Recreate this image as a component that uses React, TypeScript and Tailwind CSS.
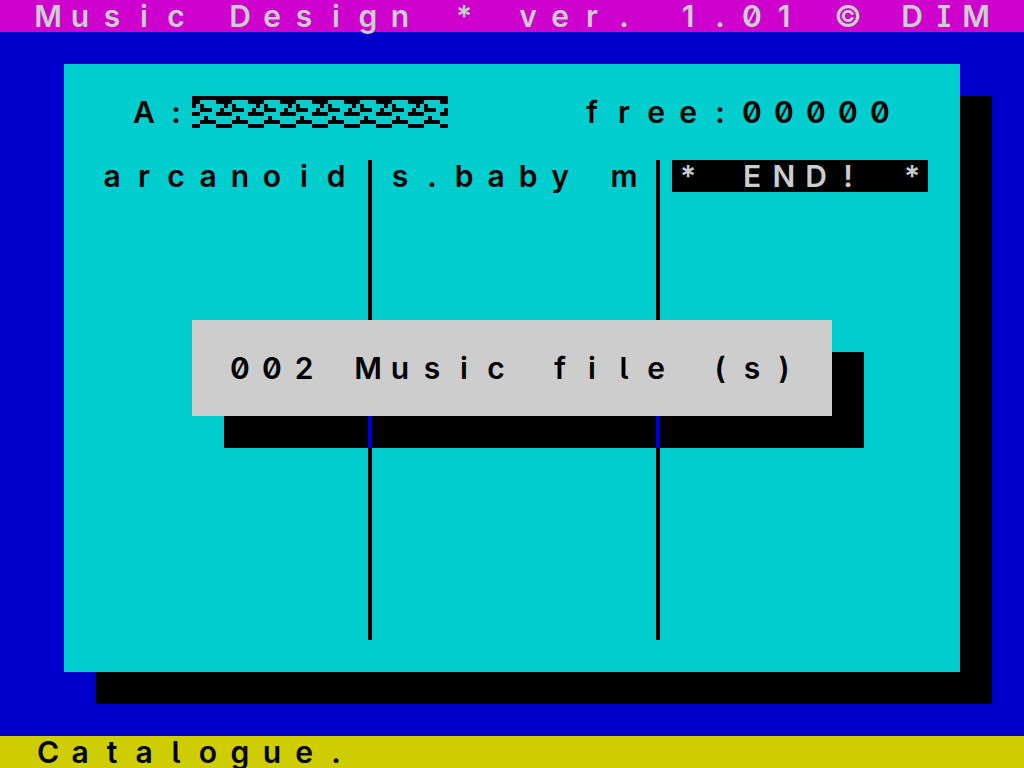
import { Fragment } from "react";
import clsx from "clsx";

const columns = [
  [{ name: "arcanoid", active: false }],
  [{ name: "s.baby m", active: false }],
  [{ name: "* END! *", active: true }],
];

// one 8x8 character, repeated where the disk name would be
const TILE = [
  "########",
  "##....##",
  "#.#.....",
  "..###..#",
  "##....##",
  "...#....",
  "..####..",
  "##....##",
];

// The screen is 32 characters wide, every character takes one cell
function Cells({ text }: { text: string }) {
  return (
    <>
      {text.split("").map((char, i) => (
        <span
          key={i}
          className="inline-block w-8 text-center align-top whitespace-pre"
        >
          {char}
        </span>
      ))}
    </>
  );
}

function DiskName() {
  return (
    <svg
      className="h-8 w-64"
      viewBox="0 0 64 8"
      shapeRendering="crispEdges"
      aria-hidden="true"
    >
      {TILE.map((row, y) =>
        row
          .repeat(8)
          .split("")
          .map((dot, x) =>
            dot === "#" ? (
              <rect key={`${x}-${y}`} x={x} y={y} width="1" height="1" />
            ) : null
          )
      )}
    </svg>
  );
}

function Divider() {
  return (
    <div className="flex w-8 flex-col items-start pl-4">
      <div className="h-64 w-1 bg-black" />
      {/* stays visible in the shadow of the message box */}
      <div className="relative z-20 h-8 w-1 bg-[#0000cd]" />
      <div className="w-1 flex-1 bg-black" />
    </div>
  );
}

export default function App() {
  return (
    <div className="flex min-h-screen flex-col bg-[#0000cd] font-['Inter',sans-serif] text-[30px] leading-8 font-semibold text-black [font-feature-settings:'zero','cv05','cv08']">
      <header className="h-8 bg-[#cd00cd] px-8 text-[#cdcdcd]">
        <h1 className="whitespace-nowrap">
          <Cells text="Music Design * ver. 1.01 © DIM" />
        </h1>
      </header>

      <main className="flex flex-1 flex-col px-16 pt-8 pb-16">
        <section className="relative flex flex-1 flex-col gap-8 bg-[#00cdcd] p-8 shadow-[32px_32px_0_0_#000]">
          <div className="flex h-8 justify-between px-8">
            <div className="flex">
              <p>
                <Cells text="A:" />
              </p>
              <DiskName />
            </div>
            <p>
              <Cells text="free:00000" />
            </p>
          </div>

          <div className="flex flex-1">
            {columns.map((files, i) => (
              <Fragment key={i}>
                {i > 0 && <Divider />}
                <ul className="flex-1">
                  {files.map((file) => (
                    <li key={file.name}>
                      <button
                        type="button"
                        className={clsx(
                          "block h-8 w-full text-left whitespace-nowrap",
                          file.active && "bg-black text-[#cdcdcd]"
                        )}
                      >
                        <Cells text={file.name} />
                      </button>
                    </li>
                  ))}
                </ul>
              </Fragment>
            ))}
          </div>

          <div
            role="dialog"
            className="absolute inset-x-32 top-64 z-10 bg-[#cdcdcd] p-8 shadow-[32px_32px_0_0_#000]"
          >
            <p className="whitespace-nowrap">
              <Cells text="002 Music file (s)" />
            </p>
          </div>
        </section>
      </main>

      <footer className="h-8 bg-[#cdcd00] px-8">
        <p>
          <Cells text="Catalogue." />
        </p>
      </footer>
    </div>
  );
}
